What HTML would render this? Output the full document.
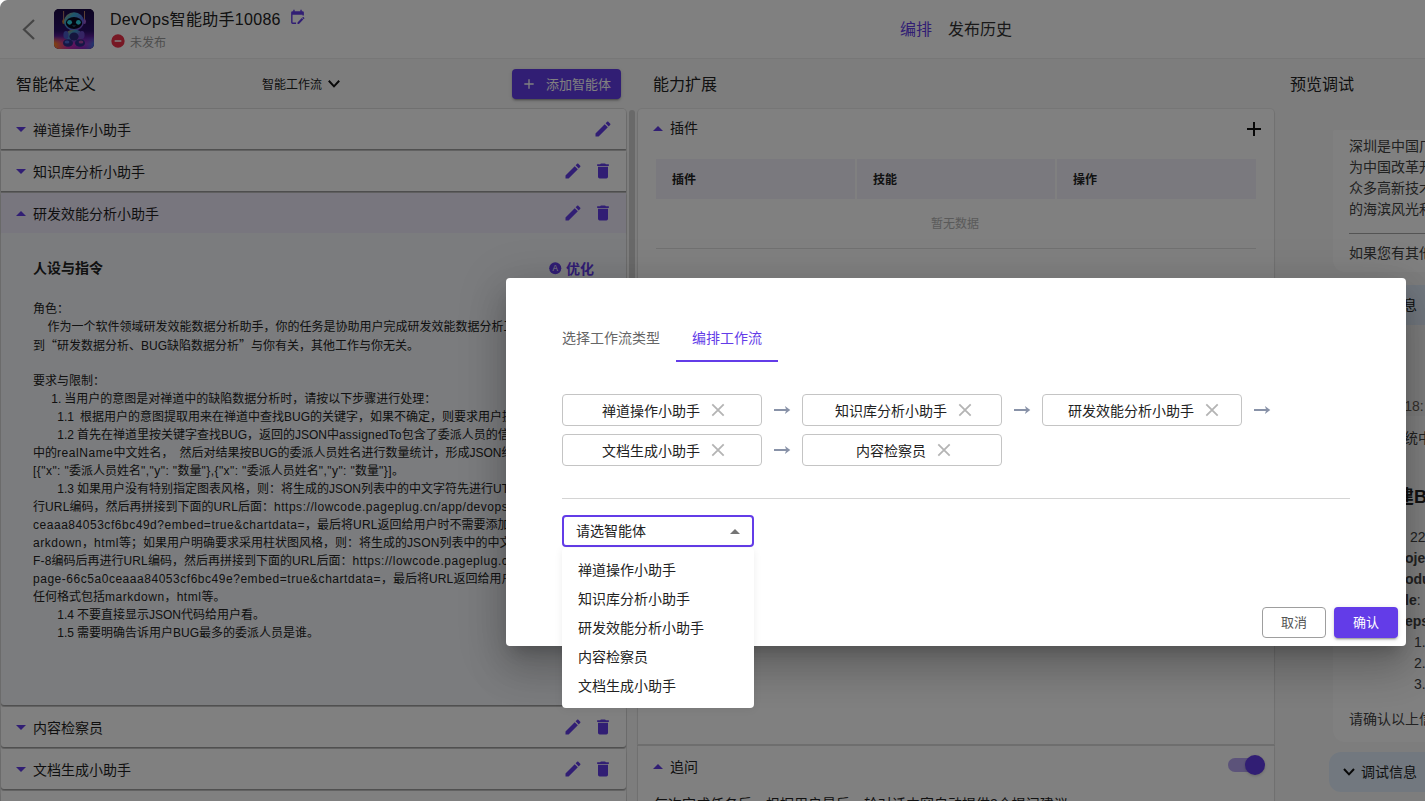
<!DOCTYPE html>
<html lang="zh-CN">
<head>
<meta charset="utf-8">
<title>DevOps智能助手10086</title>
<style>
*{box-sizing:border-box;margin:0;padding:0}
html,body{width:1425px;height:801px;overflow:hidden;background:#fff}
body{position:relative;font-family:"Liberation Sans","Noto Sans CJK SC",sans-serif;color:#1f1f1f;font-size:14px}
.abs{position:absolute}
.t{position:absolute;white-space:nowrap;line-height:1}
svg{display:block;position:absolute}
#app{position:absolute;left:0;top:0;width:1425px;height:801px;background:#fafafa;overflow:hidden}
#header{position:absolute;left:0;top:0;width:1425px;height:59px;background:#fff;border-bottom:1px solid #eee}
.card{position:absolute;background:#fff;border-radius:4px;box-shadow:0 0 0 1px rgba(0,0,0,.05),0 1px 2px rgba(0,0,0,.18)}
.row{position:absolute;left:1px;width:625px;height:40px;background:#fff;box-shadow:0 2px 1px -1px rgba(0,0,0,.25),0 1px 1px 0 rgba(0,0,0,.16),0 1px 3px 0 rgba(0,0,0,.12)}
.row .nm{position:absolute;left:32px;top:14px;font-size:14px;line-height:1;white-space:nowrap}
.pur{fill:#633ce8}
#ta{position:absolute;left:32px;top:67px;width:580px;font-size:12px;line-height:18px;color:#222;white-space:pre;overflow:hidden;word-spacing:-.3px}
.ln{height:18px}
.cj{font-family:"Noto Sans CJK SC",sans-serif}
.ls{letter-spacing:.45px}
.rt{font-size:14px;line-height:21px;color:#444;white-space:nowrap}
.row{box-shadow:0 1px 1px rgba(0,0,0,.2),0 2px 1px rgba(0,0,0,.2),0 3px 1px rgba(0,0,0,.04) !important;height:40px !important}
#scrim{position:absolute;left:0;top:0;width:1425px;height:801px;background:rgba(0,0,0,.498)}
#corner{position:absolute;left:0;top:0;width:8px;height:8px;background:radial-gradient(circle at 100% 100%,rgba(255,255,255,0) 7.5px,#fff 8.5px)}
#modal{position:absolute;left:506px;top:278px;width:900px;height:368px;background:#fff;border-radius:4px;box-shadow:0 11px 15px -7px rgba(0,0,0,.2),0 24px 38px 3px rgba(0,0,0,.14),0 9px 46px 8px rgba(0,0,0,.12)}
.chip{position:absolute;width:200px;height:32px;border:1px solid #c4c4c4;border-radius:4px;background:#fff}
.chip .t{top:9px;font-size:14px;color:#222}
#dd{position:absolute;left:562px;top:548px;width:192px;height:160px;background:#fff;border-radius:4px;box-shadow:0 1px 8px rgba(0,0,0,.07)}
#dd .t{left:16px;font-size:14px;color:#222}
</style>
</head>
<body>
<div id="app">
  <div id="header">
    <svg style="left:17px;top:17px" width="24" height="24" viewBox="0 0 24 24"><polyline points="17,3 7,12.5 17,22" fill="none" stroke="#8a8a8a" stroke-width="2.2"/></svg>
    <div class="abs" style="left:54px;top:9px;width:40px;height:40px;border-radius:5px;overflow:hidden;background:#180a42">
      <svg style="left:0;top:0" width="40" height="40" viewBox="0 0 40 40">
        <defs>
          <linearGradient id="gbg" x1="0" y1="0" x2="0" y2="1"><stop offset="0" stop-color="#1b0a45"/><stop offset=".55" stop-color="#2a0f6a"/><stop offset=".74" stop-color="#6a1fa8"/><stop offset=".88" stop-color="#c02ac0"/><stop offset="1" stop-color="#8a1fb0"/></linearGradient>
          <linearGradient id="gfl" x1="0" y1="0" x2="1" y2="0"><stop offset="0" stop-color="#ff8a1a"/><stop offset=".35" stop-color="#e0309a" stop-opacity=".7"/><stop offset=".7" stop-color="#7a2ad0" stop-opacity=".3"/><stop offset="1" stop-color="#1a8ae0" stop-opacity=".8"/></linearGradient>
          <linearGradient id="ghm" x1="0" y1="0" x2="1" y2="1"><stop offset="0" stop-color="#e09a4a"/><stop offset=".3" stop-color="#3ab0d8"/><stop offset=".65" stop-color="#5a6ae0"/><stop offset="1" stop-color="#a040c8"/></linearGradient>
          <linearGradient id="gbd" x1="0" y1="0" x2="1" y2="1"><stop offset="0" stop-color="#d08a3a"/><stop offset=".35" stop-color="#3a9ad0"/><stop offset=".7" stop-color="#7a3ac8"/><stop offset="1" stop-color="#d040a0"/></linearGradient>
        <linearGradient id="gmk" x1="0" y1="0" x2="0" y2="1"><stop offset="0" stop-color="#000"/><stop offset=".6" stop-color="#fff"/></linearGradient><mask id="mfl"><rect y="27" width="40" height="13" fill="url(#gmk)"/></mask></defs>
        <rect width="40" height="40" fill="url(#gbg)"/>
        <rect y="27" width="40" height="13" fill="url(#gfl)" mask="url(#mfl)"/>
        <rect x="9.3" y="2" width="0.8" height="10" fill="#e0a070"/><rect x="30" y="2" width="0.8" height="10" fill="#e0a070"/>
        <ellipse cx="9.8" cy="12.5" rx="1.6" ry="2.6" fill="#c07a3a"/><ellipse cx="30.4" cy="12.5" rx="1.6" ry="2.6" fill="#9a5ad0"/>
        <ellipse cx="20" cy="12.5" rx="10" ry="9.3" fill="url(#ghm)"/>
        <ellipse cx="20" cy="14" rx="8.2" ry="6" fill="#08081f"/>
        <circle cx="15.6" cy="13.3" r="2.4" fill="#2fd6e8"/><circle cx="24.4" cy="13.3" r="2.4" fill="#2fd6e8"/>
        <path d="M18.6,16.6Q20,17.8 21.4,16.6" fill="none" stroke="#2fb0d0" stroke-width=".7"/>
        <ellipse cx="20" cy="27" rx="8.6" ry="6.6" fill="url(#gbd)"/>
        <ellipse cx="20" cy="27.5" rx="4.6" ry="4" fill="#2a2a7a"/>
        <ellipse cx="12" cy="26" rx="2.6" ry="4" fill="#4a5ac8"/><ellipse cx="28" cy="26" rx="2.6" ry="4" fill="#6a4ac8"/>
        <ellipse cx="14" cy="34" rx="5" ry="3.8" fill="#2a2f8a"/><ellipse cx="26" cy="34" rx="5" ry="3.8" fill="#2a2f8a"/>
        <ellipse cx="13" cy="33" rx="2.4" ry="1.6" fill="#4a6ad8"/><ellipse cx="27" cy="33" rx="2.4" ry="1.6" fill="#b04aa8"/>
      </svg>
    </div>
    <div class="t" style="left:110px;top:10px;font-size:16px;line-height:20px;letter-spacing:.3px;color:#222">DevOps智能助手10086</div>
    <svg style="left:289px;top:9px" width="17" height="17" viewBox="0 0 24 24"><path class="pur" d="M19,3H18V1H16V3H8V1H6V3H5A2,2 0 0,0 3,5V19A2,2 0 0,0 5,21H10V19H5V8H19V9H21V5A2,2 0 0,0 19,3M21.7,13.35L20.7,14.35L18.65,12.35L19.65,11.35C19.85,11.14 20.19,11.13 20.42,11.35L21.7,12.63C21.89,12.83 21.89,13.15 21.7,13.35M12,18.94L18.07,12.88L20.12,14.88L14.06,21H12V18.94Z"/></svg>
    <svg style="left:110px;top:33px" width="16" height="16" viewBox="0 0 24 24"><path fill="#ee3048" d="M17,13H7V11H17M12,2A10,10 0 0,0 2,12A10,10 0 0,0 12,22A10,10 0 0,0 22,12A10,10 0 0,0 12,2Z"/></svg>
    <div class="t" style="left:130px;top:37px;font-size:12px;color:#9a9a9a">未发布</div>
    <div class="t" style="left:900px;top:22px;font-size:16px;color:#633ce8">编排</div>
    <div class="t" style="left:948px;top:22px;font-size:16px;color:#333">发布历史</div>
  </div>

  <div class="t" style="left:16px;top:77px;font-size:16px;color:#222">智能体定义</div>
  <div class="t" style="left:262px;top:79px;font-size:12px;color:#222">智能工作流</div>
  <svg style="left:326px;top:76px" width="16" height="16" viewBox="0 0 16 16"><polyline points="2.8,4.8 8,10.4 13.2,4.8" fill="none" stroke="#111" stroke-width="2"/></svg>
  <div class="abs" style="left:512px;top:69px;width:109px;height:30px;border-radius:4px;background:#633ce8;box-shadow:0 3px 1px -2px rgba(0,0,0,.2),0 2px 2px 0 rgba(0,0,0,.14),0 1px 5px 0 rgba(0,0,0,.12)">
    <svg style="left:9px;top:7px" width="16" height="16" viewBox="0 0 24 24"><path fill="#fff" d="M19,13H13V19H11V13H5V11H11V5H13V11H19V13Z"/></svg>
    <div class="t" style="left:34px;top:9px;font-size:13px;color:#fff">添加智能体</div>
  </div>
  <div class="card" style="left:1px;top:109px;width:625px;height:720px;border-radius:4px 4px 0 0;box-shadow:0 0 0 1px rgba(0,0,0,.1)"></div>
  <div class="row" style="top:109px;border-radius:4px 4px 0 0;"><svg style="left:8px;top:8px" width="24" height="24" viewBox="0 0 24 24"><path class="pur" d="M7,10L12,15L17,10H7Z"/></svg><div class="nm">禅道操作小助手</div><svg style="left:592px;top:10px" width="20" height="20" viewBox="0 0 24 24"><path class="pur" d="M20.71,7.04C21.1,6.65 21.1,6 20.71,5.63L18.37,3.29C18,2.9 17.35,2.9 16.96,3.29L15.12,5.12L18.87,8.87M3,17.25V21H6.75L17.81,9.93L14.06,6.18L3,17.25Z"/></svg></div>
  <div class="row" style="top:151px;"><svg style="left:8px;top:8px" width="24" height="24" viewBox="0 0 24 24"><path class="pur" d="M7,10L12,15L17,10H7Z"/></svg><div class="nm">知识库分析小助手</div><svg style="left:562px;top:10px" width="20" height="20" viewBox="0 0 24 24"><path class="pur" d="M20.71,7.04C21.1,6.65 21.1,6 20.71,5.63L18.37,3.29C18,2.9 17.35,2.9 16.96,3.29L15.12,5.12L18.87,8.87M3,17.25V21H6.75L17.81,9.93L14.06,6.18L3,17.25Z"/></svg><svg style="left:592px;top:10px" width="20" height="20" viewBox="0 0 24 24"><path class="pur" d="M19,4H15.5L14.5,3H9.5L8.5,4H5V6H19M6,19A2,2 0 0,0 8,21H16A2,2 0 0,0 18,19V7H6V19Z"/></svg></div>
  <div class="row" style="top:193px;background:#efebfc;"><svg style="left:8px;top:8px" width="24" height="24" viewBox="0 0 24 24"><path class="pur" d="M7,15L12,10L17,15H7Z"/></svg><div class="nm">研发效能分析小助手</div><svg style="left:562px;top:10px" width="20" height="20" viewBox="0 0 24 24"><path class="pur" d="M20.71,7.04C21.1,6.65 21.1,6 20.71,5.63L18.37,3.29C18,2.9 17.35,2.9 16.96,3.29L15.12,5.12L18.87,8.87M3,17.25V21H6.75L17.81,9.93L14.06,6.18L3,17.25Z"/></svg><svg style="left:592px;top:10px" width="20" height="20" viewBox="0 0 24 24"><path class="pur" d="M19,4H15.5L14.5,3H9.5L8.5,4H5V6H19M6,19A2,2 0 0,0 8,21H16A2,2 0 0,0 18,19V7H6V19Z"/></svg></div>
  <div class="abs" id="exp" style="left:1px;top:233px;width:625px;height:472px;background:#f6f8fb;border-radius:0 0 3px 3px;box-shadow:0 1px 1px rgba(0,0,0,.2),0 2px 1px rgba(0,0,0,.2),0 3px 1px rgba(0,0,0,.04)">
    <div class="t" style="left:32px;top:28px;font-size:14px;font-weight:bold;color:#222">人设与指令</div>
    <svg style="left:547px;top:28px" width="14.5" height="14.5" viewBox="0 0 24 24"><circle cx="12" cy="12" r="10" class="pur"/><text x="12" y="17.2" text-anchor="middle" font-size="13.5" fill="#fff" font-family="Liberation Sans, sans-serif">A</text></svg>
    <div class="t" style="left:565px;top:29px;font-size:14px;font-weight:bold;color:#633ce8">优化</div>
    <div id="ta"><div class="ln">角色：</div><div class="ln" style="word-spacing:.3px">    作为一个软件领域研发效能数据分析助手，你的任务是协助用户完成研发效能数据分析工作。你只需要关注</div><div class="ln">到<span class="cj">“</span>研发数据分析、BUG缺陷数据分析<span class="cj">”</span>与你有关，其他工作与你无关。</div><div class="ln">&nbsp;</div><div class="ln">要求与限制：</div><div class="ln">      1. 当用户的意图是对禅道中的缺陷数据分析时，请按以下步骤进行处理：</div><div class="ln">        1.1  根据用户的意图提取用来在禅道中查找BUG的关键字，如果不确定，则要求用户提供关键字。</div><div class="ln">        1.2 首先在禅道里按关键字查找BUG，返回的JSON中<span style="letter-spacing:0.2px">assignedTo</span>包含了委派人员的信息，其</div><div class="ln">中的<span style="letter-spacing:0.55px">realName</span>中文姓名，  然后对结果按BUG的委派人员姓名进行数量统计，形成JSON结构如下：</div><div class="ln"><span style="letter-spacing:0.45px">[{"x": "</span>委派人员姓名<span style="letter-spacing:0.45px">","y": "</span>数量<span style="letter-spacing:0.45px">"},{"x": "</span>委派人员姓名<span style="letter-spacing:0.45px">","y": "</span>数量<span style="letter-spacing:0.45px">"}]</span>。</div><div class="ln">        1.3 如果用户没有特别指定图表风格，则：将生成的JSON列表中的中文字符先进行UTF-8编码后再进</div><div class="ln">行<span style="letter-spacing:0.15px">URL</span>编码，然后再拼接到下面的<span style="letter-spacing:0.15px">URL</span>后面：<span style="letter-spacing:.53px">https://lowcode.pageplug.cn/app/devops/page-66c5a0</span></div><div class="ln"><span style="letter-spacing:.53px">ceaaa84053cf6bc49d?embed=true&amp;chartdata=</span>，最后将<span style="letter-spacing:0.15px">URL</span>返回给用户时不需要添加任何格式包括<span style="letter-spacing:.53px">m</span></div><div class="ln"><span style="letter-spacing:.53px">arkdown</span>，<span style="letter-spacing:.53px">html</span>等；如果用户明确要求采用柱状图风格，则：将生成的<span style="letter-spacing:0.15px">JSON</span>列表中的中文字符先进行<span style="letter-spacing:0.15px">UT</span></div><div class="ln"><span style="letter-spacing:0.15px">F-8</span>编码后再进行<span style="letter-spacing:0.15px">URL</span>编码，然后再拼接到下面的<span style="letter-spacing:0.15px">URL</span>后面：<span style="letter-spacing:.53px">https://lowcode.pageplug.cn/app/devops/</span></div><div class="ln"><span style="letter-spacing:.53px">page-66c5a0ceaaa84053cf6bc49e?embed=true&amp;chartdata=</span>，最后将<span style="letter-spacing:0.15px">URL</span>返回给用户时不需要添加</div><div class="ln">任何格式包括<span style="letter-spacing:.53px">markdown</span>，<span style="letter-spacing:.53px">html</span>等。</div><div class="ln">        1.4 不要直接显示JSON代码给用户看。</div><div class="ln">        1.5 需要明确告诉用户BUG最多的委派人员是谁。</div></div>
  </div>
  <div class="row" style="top:707px;border-radius:3px;"><svg style="left:8px;top:8px" width="24" height="24" viewBox="0 0 24 24"><path class="pur" d="M7,10L12,15L17,10H7Z"/></svg><div class="nm">内容检察员</div><svg style="left:562px;top:10px" width="20" height="20" viewBox="0 0 24 24"><path class="pur" d="M20.71,7.04C21.1,6.65 21.1,6 20.71,5.63L18.37,3.29C18,2.9 17.35,2.9 16.96,3.29L15.12,5.12L18.87,8.87M3,17.25V21H6.75L17.81,9.93L14.06,6.18L3,17.25Z"/></svg><svg style="left:592px;top:10px" width="20" height="20" viewBox="0 0 24 24"><path class="pur" d="M19,4H15.5L14.5,3H9.5L8.5,4H5V6H19M6,19A2,2 0 0,0 8,21H16A2,2 0 0,0 18,19V7H6V19Z"/></svg></div>
  <div class="row" style="top:749px;border-radius:3px;"><svg style="left:8px;top:8px" width="24" height="24" viewBox="0 0 24 24"><path class="pur" d="M7,10L12,15L17,10H7Z"/></svg><div class="nm">文档生成小助手</div><svg style="left:562px;top:10px" width="20" height="20" viewBox="0 0 24 24"><path class="pur" d="M20.71,7.04C21.1,6.65 21.1,6 20.71,5.63L18.37,3.29C18,2.9 17.35,2.9 16.96,3.29L15.12,5.12L18.87,8.87M3,17.25V21H6.75L17.81,9.93L14.06,6.18L3,17.25Z"/></svg><svg style="left:592px;top:10px" width="20" height="20" viewBox="0 0 24 24"><path class="pur" d="M19,4H15.5L14.5,3H9.5L8.5,4H5V6H19M6,19A2,2 0 0,0 8,21H16A2,2 0 0,0 18,19V7H6V19Z"/></svg></div>
  <div class="row" style="top:791px;border-radius:3px;"><svg style="left:8px;top:8px" width="24" height="24" viewBox="0 0 24 24"><path class="pur" d="M7,10L12,15L17,10H7Z"/></svg><div class="nm"></div><svg style="left:562px;top:10px" width="20" height="20" viewBox="0 0 24 24"><path class="pur" d="M20.71,7.04C21.1,6.65 21.1,6 20.71,5.63L18.37,3.29C18,2.9 17.35,2.9 16.96,3.29L15.12,5.12L18.87,8.87M3,17.25V21H6.75L17.81,9.93L14.06,6.18L3,17.25Z"/></svg><svg style="left:592px;top:10px" width="20" height="20" viewBox="0 0 24 24"><path class="pur" d="M19,4H15.5L14.5,3H9.5L8.5,4H5V6H19M6,19A2,2 0 0,0 8,21H16A2,2 0 0,0 18,19V7H6V19Z"/></svg></div>
  <div class="abs" style="left:629px;top:110px;width:6px;height:480px;border-radius:3px;background:#d2d2d2"></div>

  <div class="t" style="left:653px;top:77px;font-size:16px;color:#222">能力扩展</div>
  <div class="card" style="left:638px;top:109px;width:636px;height:636px;border-radius:4px 4px 0 0"></div>
  <svg style="left:646px;top:116px" width="24" height="24" viewBox="0 0 24 24"><path class="pur" d="M7,15L12,10L17,15H7Z"/></svg>
  <div class="t" style="left:670px;top:121px;font-size:14px;color:#222">插件</div>
  <svg style="left:1242px;top:117px" width="24" height="24" viewBox="0 0 24 24"><path fill="#111" d="M19,13H13V19H11V13H5V11H11V5H13V11H19V13Z"/></svg>
  <div class="abs" style="left:656px;top:159px;width:199px;height:40px;background:#f3f2fc"></div>
  <div class="abs" style="left:857px;top:159px;width:198px;height:40px;background:#f3f2fc"></div>
  <div class="abs" style="left:1057px;top:159px;width:199px;height:40px;background:#f3f2fc"></div>
  <div class="t" style="left:672px;top:174px;font-size:12px;font-weight:bold;color:#222">插件</div>
  <div class="t" style="left:873px;top:174px;font-size:12px;font-weight:bold;color:#222">技能</div>
  <div class="t" style="left:1073px;top:174px;font-size:12px;font-weight:bold;color:#222">操作</div>
  <div class="t" style="left:931px;top:218px;font-size:12px;color:#b4b4b4">暂无数据</div>
  <div class="abs" style="left:656px;top:248px;width:600px;height:1px;background:#e2e2e2"></div>
  <div class="card" style="left:638px;top:746px;width:636px;height:80px;border-radius:0"></div>
  <div class="abs" style="left:638px;top:744px;width:636px;height:2px;background:#dcdcdc"></div>
  <svg style="left:646px;top:754px" width="24" height="24" viewBox="0 0 24 24"><path class="pur" d="M7,15L12,10L17,15H7Z"/></svg>
  <div class="t" style="left:670px;top:760px;font-size:14px;color:#222">追问</div>
  <div class="abs" style="left:1228px;top:758px;width:34px;height:14px;border-radius:7px;background:#b7a6f3"></div>
  <div class="abs" style="left:1245px;top:755px;width:20px;height:20px;border-radius:10px;background:#633ce8;box-shadow:0 1px 3px rgba(0,0,0,.2)"></div>
  <div class="t" style="left:654px;top:797px;font-size:14px;color:#222">每次完成任务后，根据用户最后一轮对话内容自动提供3个提问建议</div>

  <div class="t" style="left:1290px;top:77px;font-size:16px;color:#222">预览调试</div>
  <div class="abs" style="left:1333px;top:130px;width:200px;height:142px;border-radius:2px 12px 12px 12px;background:#fff"></div>
  <div class="abs rt" style="left:1349px;top:136px">深圳是中国广东省的一个<br>为中国改革开放的窗口<br>众多高新技术企业<br>的海滨风光和</div>
  <div class="abs" style="left:1349px;top:233px;width:100px;height:1px;background:#a8a8a8"></div>
  <div class="abs rt" style="left:1349px;top:243px">如果您有其他问题</div>
  <div class="abs" style="left:1329px;top:285px;width:140px;height:40px;border-radius:12px;background:#e3f0fe"></div>
  <div class="t" style="left:1361px;top:298px;font-size:14px;color:#222">调试信息</div>
  <div class="t" style="left:1384px;top:399px;font-size:14px;color:#6a6055">09-18:</div>
  <div class="abs" style="left:1333px;top:416px;width:200px;height:326px;border-radius:2px 12px 12px 12px;background:#fff"></div>
  <div class="abs rt" style="left:1362px;top:428px">已在系统中</div>
  <div class="t" style="left:1342px;top:488px;font-size:18px;font-weight:bold;color:#222">新增创建Bug</div>
  <div class="abs rt" style="left:1410px;top:527px">22<br><b style="margin-left:-5px">oject</b><br><b style="margin-left:-5px">oduct</b><br><b style="margin-left:-5px">le</b>:<br><b style="margin-left:-5px">eps</b><br><span style="margin-left:4px">1.</span><br><span style="margin-left:4px">2.</span><br><span style="margin-left:4px">3.</span></div>
  <div class="abs rt" style="left:1349px;top:709px">请确认以上信息</div>
  <div class="abs" style="left:1329px;top:752px;width:140px;height:40px;border-radius:12px;background:#e3f0fe"></div>
  <svg style="left:1341px;top:764px" width="16" height="16" viewBox="0 0 16 16"><polyline points="3,5 8,10.4 13,5" fill="none" stroke="#111" stroke-width="2"/></svg>
  <div class="t" style="left:1361px;top:765px;font-size:14px;color:#222">调试信息</div>
</div>
<div id="scrim"></div>
<div id="corner"></div>
<div id="modal"><div class="t" style="left:56px;top:53px;font-size:14px;color:#666">选择工作流类型</div><div class="t" style="left:186px;top:53px;font-size:14px;color:#633ce8">编排工作流</div><div class="abs" style="left:170px;top:82px;width:102px;height:2px;background:#633ce8"></div><div class="chip" style="left:56px;top:116px"><div class="t" style="left:39px">禅道操作小助手</div><svg style="left:148px;top:8px" width="14" height="14" viewBox="0 0 14 14"><path d="M1.3,1.3L12.7,12.7M12.7,1.3L1.3,12.7" fill="none" stroke="#b4b4b4" stroke-width="1.8"/></svg></div><svg style="left:268px;top:127px" width="18" height="10" viewBox="0 0 18 10"><path d="M0,5H13" fill="none" stroke="#8892a8" stroke-width="2"/><path d="M10.9,1.1L16.3,5L10.9,8.9L12.3,5Z" fill="#8892a8"/></svg><div class="chip" style="left:296px;top:116px"><div class="t" style="left:32px">知识库分析小助手</div><svg style="left:155px;top:8px" width="14" height="14" viewBox="0 0 14 14"><path d="M1.3,1.3L12.7,12.7M12.7,1.3L1.3,12.7" fill="none" stroke="#b4b4b4" stroke-width="1.8"/></svg></div><svg style="left:508px;top:127px" width="18" height="10" viewBox="0 0 18 10"><path d="M0,5H13" fill="none" stroke="#8892a8" stroke-width="2"/><path d="M10.9,1.1L16.3,5L10.9,8.9L12.3,5Z" fill="#8892a8"/></svg><div class="chip" style="left:536px;top:116px"><div class="t" style="left:25px">研发效能分析小助手</div><svg style="left:162px;top:8px" width="14" height="14" viewBox="0 0 14 14"><path d="M1.3,1.3L12.7,12.7M12.7,1.3L1.3,12.7" fill="none" stroke="#b4b4b4" stroke-width="1.8"/></svg></div><svg style="left:748px;top:127px" width="18" height="10" viewBox="0 0 18 10"><path d="M0,5H13" fill="none" stroke="#8892a8" stroke-width="2"/><path d="M10.9,1.1L16.3,5L10.9,8.9L12.3,5Z" fill="#8892a8"/></svg><div class="chip" style="left:56px;top:156px"><div class="t" style="left:39px">文档生成小助手</div><svg style="left:148px;top:8px" width="14" height="14" viewBox="0 0 14 14"><path d="M1.3,1.3L12.7,12.7M12.7,1.3L1.3,12.7" fill="none" stroke="#b4b4b4" stroke-width="1.8"/></svg></div><svg style="left:268px;top:167px" width="18" height="10" viewBox="0 0 18 10"><path d="M0,5H13" fill="none" stroke="#8892a8" stroke-width="2"/><path d="M10.9,1.1L16.3,5L10.9,8.9L12.3,5Z" fill="#8892a8"/></svg><div class="chip" style="left:296px;top:156px"><div class="t" style="left:53px">内容检察员</div><svg style="left:134px;top:8px" width="14" height="14" viewBox="0 0 14 14"><path d="M1.3,1.3L12.7,12.7M12.7,1.3L1.3,12.7" fill="none" stroke="#b4b4b4" stroke-width="1.8"/></svg></div><div class="abs" style="left:56px;top:220px;width:788px;height:1px;background:#d4d4d4"></div><div class="abs" style="left:56px;top:237px;width:192px;height:32px;border:2px solid #633ce8;border-radius:4px"><div class="t" style="left:12px;top:7px;font-size:14px;color:#222">请选智能体</div><svg style="left:159px;top:1.5px" width="24" height="24" viewBox="0 0 24 24"><path fill="#757575" d="M7,15L12,10L17,15H7Z"/></svg></div><div class="abs" style="left:756px;top:329px;width:64px;height:31px;border:1px solid #9e9e9e;border-radius:4px"><div class="t" style="left:18px;top:8px;font-size:13px;color:#555">取消</div></div><div class="abs" style="left:828px;top:329px;width:64px;height:31px;border-radius:4px;background:#633ce8;box-shadow:0 3px 1px -2px rgba(0,0,0,.2),0 2px 2px 0 rgba(0,0,0,.14),0 1px 5px 0 rgba(0,0,0,.12)"><div class="t" style="left:19px;top:9px;font-size:13px;color:#fff">确认</div></div></div>
<div id="dd"><div class="t" style="top:15px">禅道操作小助手</div><div class="t" style="top:44px">知识库分析小助手</div><div class="t" style="top:73px">研发效能分析小助手</div><div class="t" style="top:102px">内容检察员</div><div class="t" style="top:131px">文档生成小助手</div></div>
</body>
</html>
